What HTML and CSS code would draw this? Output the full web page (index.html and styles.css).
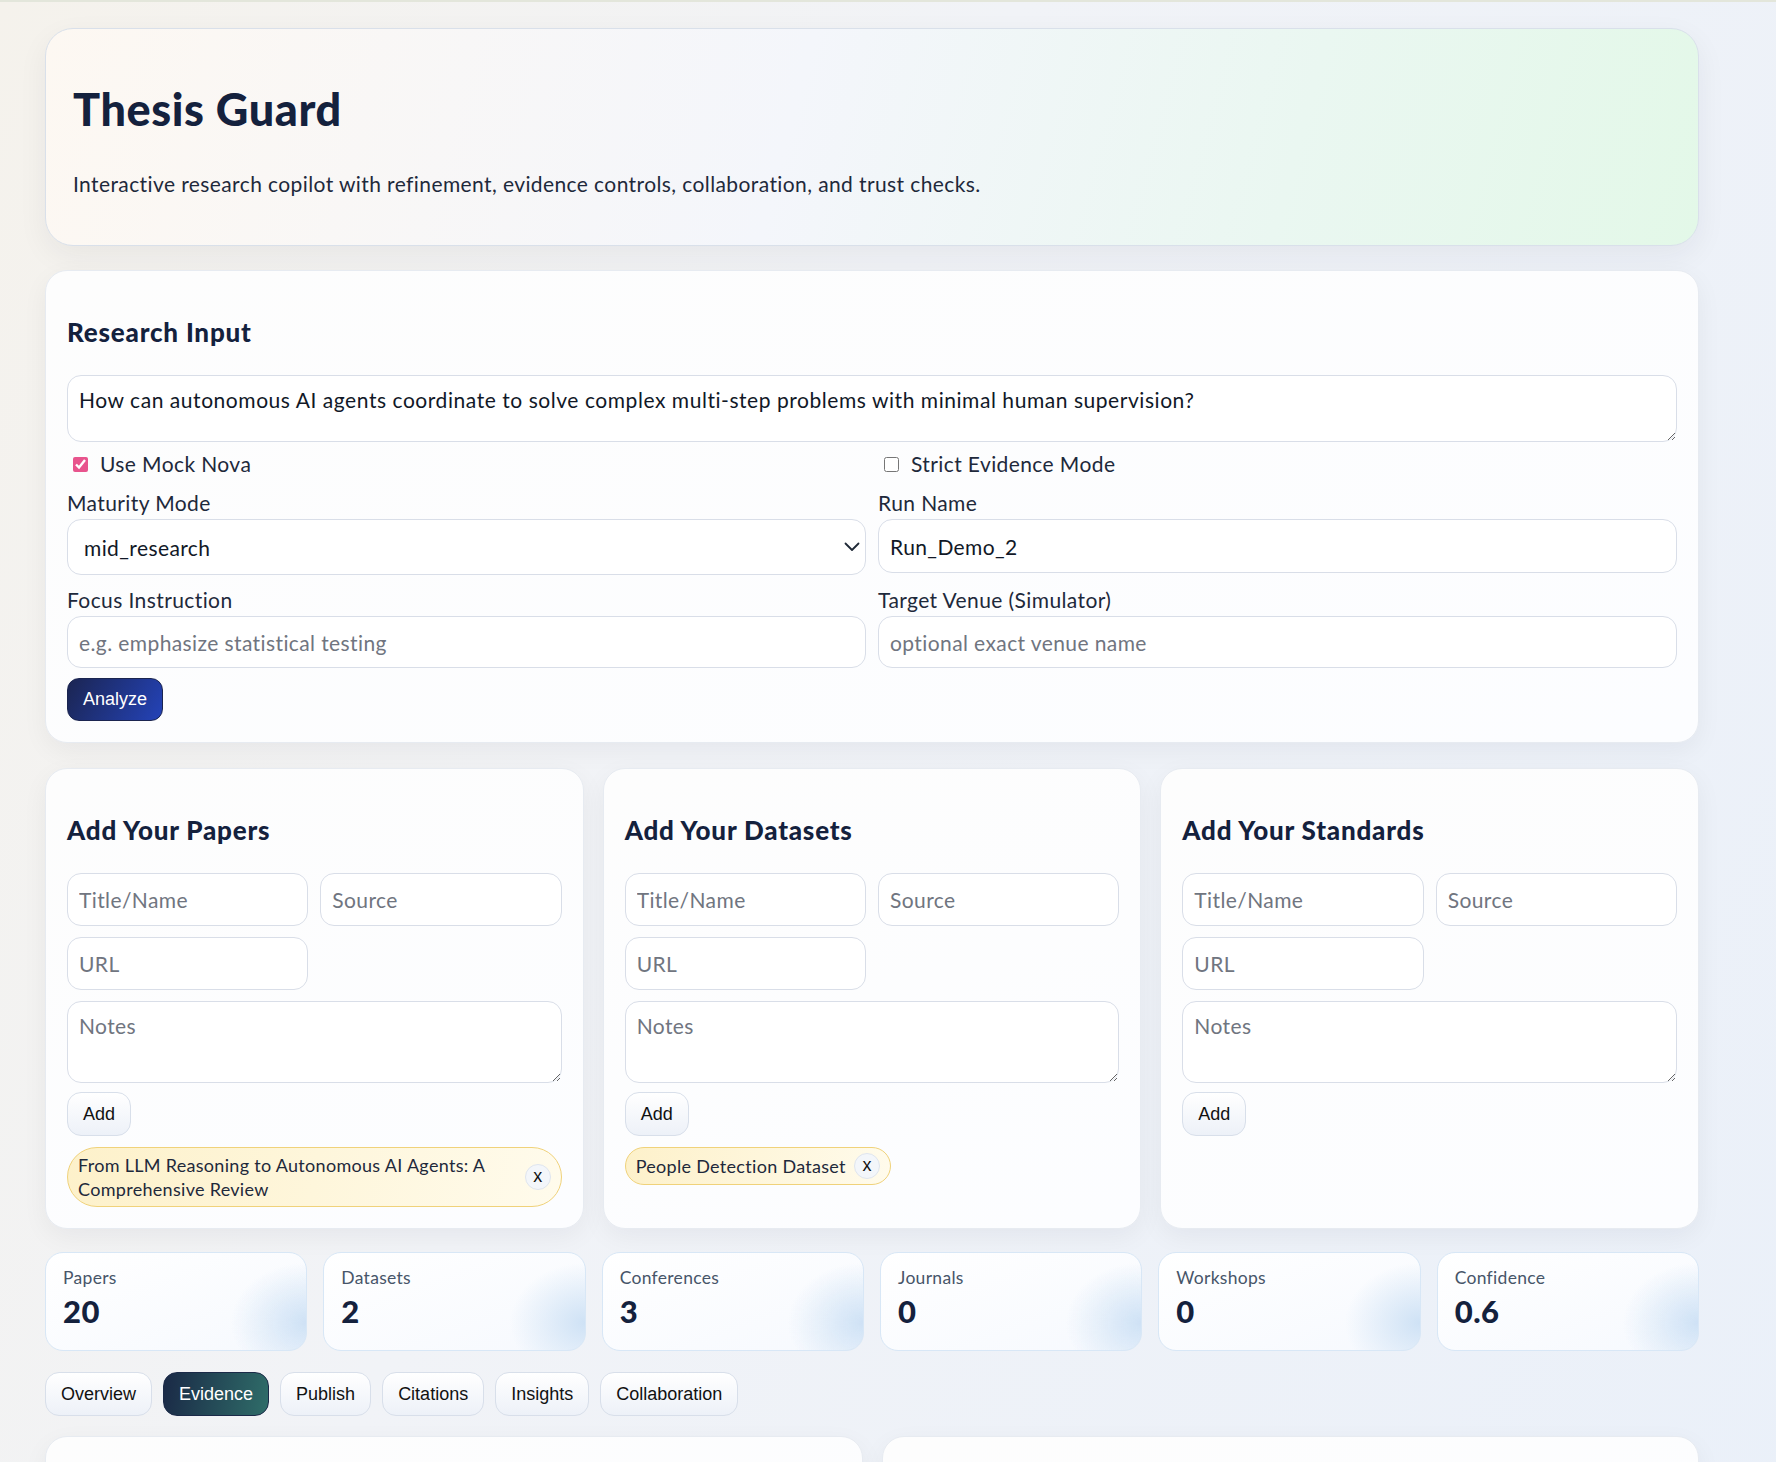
FILE: index.html
```html
<!DOCTYPE html>
<html lang="en">
<head>
    <meta charset="UTF-8">
    <meta name="viewport" content="width=device-width, initial-scale=1.0">
    <title>Thesis Guard</title>
    <link rel="stylesheet" href="styles.css">
</head>
<body>
    <div class="page">
        <!-- Header -->
        <header class="hero">
            <h1>Thesis Guard</h1>
            <p>Interactive research copilot with refinement, evidence controls, collaboration, and trust checks.</p>
        </header>

        <!-- Research input -->
        <section class="card research">
            <h2>Research Input</h2>
            <textarea class="question">How can autonomous AI agents coordinate to solve complex multi-step problems with minimal human supervision?</textarea>
            <div class="form-grid">
                <label class="check"><input type="checkbox" checked> Use Mock Nova</label>
                <label class="check"><input type="checkbox"> Strict Evidence Mode</label>

                <div class="field">
                    <span class="field-label">Maturity Mode</span>
                    <div class="select-wrap">
                        <select class="select">
                            <option>mid_research</option>
                            <option>early_research</option>
                            <option>late_research</option>
                        </select>
                        <svg class="chevron" width="16" height="10" viewBox="0 0 16 10"><polyline points="1.5,1.5 8,8 14.5,1.5" fill="none" stroke="#1f2937" stroke-width="1.8" stroke-linecap="round" stroke-linejoin="round"/></svg>
                    </div>
                </div>
                <div class="field">
                    <span class="field-label">Run Name</span>
                    <input class="text-input run-name" type="text" value="Run_Demo_2">
                </div>

                <div class="field">
                    <span class="field-label">Focus Instruction</span>
                    <input class="text-input short" type="text" placeholder="e.g. emphasize statistical testing">
                </div>
                <div class="field">
                    <span class="field-label">Target Venue (Simulator)</span>
                    <input class="text-input short" type="text" placeholder="optional exact venue name">
                </div>
            </div>
            <button class="btn-primary">Analyze</button>
        </section>

        <!-- User sources -->
        <div class="add-grid">
            <section class="card add-card">
                <h2>Add Your Papers</h2>
                <div class="entry-grid">
                    <input class="entry" type="text" placeholder="Title/Name">
                    <input class="entry" type="text" placeholder="Source">
                    <input class="entry" type="text" placeholder="URL">
                    <textarea class="notes" placeholder="Notes"></textarea>
                </div>
                <button class="btn-soft add-btn">Add</button>
                <div class="chips">
                    <span class="chip"><span>From LLM Reasoning to Autonomous AI Agents: A Comprehensive Review</span><button class="chip-x">x</button></span>
                </div>
            </section>

            <section class="card add-card">
                <h2>Add Your Datasets</h2>
                <div class="entry-grid">
                    <input class="entry" type="text" placeholder="Title/Name">
                    <input class="entry" type="text" placeholder="Source">
                    <input class="entry" type="text" placeholder="URL">
                    <textarea class="notes" placeholder="Notes"></textarea>
                </div>
                <button class="btn-soft add-btn">Add</button>
                <div class="chips">
                    <span class="chip"><span>People Detection Dataset</span><button class="chip-x">x</button></span>
                </div>
            </section>

            <section class="card add-card">
                <h2>Add Your Standards</h2>
                <div class="entry-grid">
                    <input class="entry" type="text" placeholder="Title/Name">
                    <input class="entry" type="text" placeholder="Source">
                    <input class="entry" type="text" placeholder="URL">
                    <textarea class="notes" placeholder="Notes"></textarea>
                </div>
                <button class="btn-soft add-btn">Add</button>
            </section>
        </div>

        <!-- Metrics -->
        <div class="stats">
            <div class="stat"><div class="stat-label">Papers</div><div class="stat-value">20</div></div>
            <div class="stat"><div class="stat-label">Datasets</div><div class="stat-value">2</div></div>
            <div class="stat"><div class="stat-label">Conferences</div><div class="stat-value">3</div></div>
            <div class="stat"><div class="stat-label">Journals</div><div class="stat-value">0</div></div>
            <div class="stat"><div class="stat-label">Workshops</div><div class="stat-value">0</div></div>
            <div class="stat"><div class="stat-label">Confidence</div><div class="stat-value">0.6</div></div>
        </div>

        <nav class="tabs">
            <button class="btn-soft tab">Overview</button>
            <button class="btn-soft tab active">Evidence</button>
            <button class="btn-soft tab">Publish</button>
            <button class="btn-soft tab">Citations</button>
            <button class="btn-soft tab">Insights</button>
            <button class="btn-soft tab">Collaboration</button>
        </nav>

        <div class="panels">
            <section class="card panel"></section>
            <section class="card panel"></section>
        </div>
    </div>
</body>
</html>
```

FILE: styles.css
```css
body {
    margin: 0;
    min-height: 100vh;
    border-top: 2px solid #e3e6db;
    background: linear-gradient(115deg, #f5f2ec 0%, #f1f3f7 40%, #eaf0f9 100%);
    font-family: Lato, "Noto Sans", sans-serif;
    color: #1e293b;
    overflow: hidden;
}

.page {
    width: 1654px;
    margin-left: 45px;
    padding-top: 26px;
    font-size: 21px;
    letter-spacing: 0.4px;
}

/* Header */
.hero {
    box-sizing: border-box;
    height: 218px;
    padding: 54px 27px 0;
    border: 1px solid #d9e0ea;
    border-radius: 28px;
    background: linear-gradient(105deg, #fdf8f2 0%, #f4f6fb 45%, #eaf7f1 75%, #e3f8e8 100%);
    box-shadow: 0 10px 30px rgba(30, 41, 59, 0.06);
}

.hero h1 {
    margin: 0;
    font-size: 45px;
    line-height: 52px;
    font-weight: 900;
    letter-spacing: 0.6px;
    color: #14213d;
}

.hero p {
    margin: 35px 0 0;
    font-size: 21px;
    line-height: 28px;
    color: #1e293b;
}

/* Cards */
.card {
    box-sizing: border-box;
    padding: 46px 21px 21px;
    border: 1px solid #e7ebf1;
    border-radius: 22px;
    background: linear-gradient(160deg, #fdfdfd 0%, #fcfdff 100%);
    box-shadow: 0 8px 26px rgba(15, 23, 42, 0.05);
}

.card h2 {
    margin: 0 0 28px;
    font-size: 26px;
    line-height: 30px;
    font-weight: 900;
    letter-spacing: 0.8px;
    color: #14213d;
}

.research {
    margin-top: 24px;
}

.question,
.notes {
    display: block;
    width: 100%;
    box-sizing: border-box;
    padding: 10px 11px;
    border: 1px solid #d9dee8;
    border-radius: 14px;
    background: #fff;
    font-family: Lato, "Noto Sans", sans-serif;
    font-size: 21px;
    line-height: 28px;
    letter-spacing: 0.4px;
    color: #111827;
}

.question {
    height: 67px;
    letter-spacing: 0.55px;
}

.form-grid {
    display: grid;
    grid-template-columns: 1fr 1fr;
    gap: 11px 12px;
    margin-top: 8px;
}

.check {
    display: flex;
    align-items: center;
    line-height: 28px;
}

.check input {
    width: 15px;
    height: 15px;
    margin: 0 12px 0 6px;
    accent-color: #e8548d;
}

.field-label {
    display: block;
    margin-bottom: 2px;
    line-height: 28px;
}

.select-wrap {
    position: relative;
}

.select {
    display: block;
    width: 100%;
    height: 56px;
    padding: 0 40px 0 16px;
    appearance: none;
    border: 1px solid #d9dee8;
    border-radius: 14px;
    background: #fff;
    font-family: Lato, "Noto Sans", sans-serif;
    font-size: 21px;
    letter-spacing: 0.4px;
    color: #111827;
}

.chevron {
    position: absolute;
    right: 6px;
    top: 23px;
}

.text-input,
.entry {
    display: block;
    width: 100%;
    box-sizing: border-box;
    padding: 0 11px;
    border: 1px solid #d9dee8;
    border-radius: 14px;
    background: #fff;
    font-family: Lato, "Noto Sans", sans-serif;
    font-size: 21px;
    letter-spacing: 0.4px;
    color: #111827;
}

.run-name {
    height: 54px;
}

.short {
    height: 52px;
}

::placeholder {
    color: #707580;
}

.btn-primary {
    display: block;
    height: 43px;
    margin-top: 10px;
    padding: 0 15px;
    border: 1px solid #1b2550;
    border-radius: 12px;
    background: linear-gradient(120deg, #1b2552 0%, #2443b8 100%);
    font-family: "Liberation Sans", Arial, sans-serif;
    font-size: 18px;
    letter-spacing: 0;
    color: #fff;
}

.btn-soft {
    height: 44px;
    padding: 0 15px;
    border: 1px solid #d8dfea;
    border-radius: 14px;
    background: linear-gradient(180deg, #ffffff 0%, #edf1f8 100%);
    font-family: "Liberation Sans", Arial, sans-serif;
    font-size: 18px;
    letter-spacing: 0;
    color: #111;
}

/* Add your ... cards */
.add-grid {
    display: grid;
    grid-template-columns: repeat(3, 1fr);
    gap: 19px;
    margin-top: 25px;
}

.entry-grid {
    display: grid;
    grid-template-columns: 1fr 1fr;
    gap: 11px 12px;
}

.entry {
    height: 53px;
}

.notes {
    grid-column: 1 / -1;
    height: 82px;
}

.add-btn {
    display: block;
    margin-top: 9px;
}

.chips {
    display: flex;
    margin-top: 11px;
}

.chip {
    display: inline-flex;
    align-items: center;
    gap: 8px;
    max-width: 100%;
    box-sizing: border-box;
    padding: 5px 10px;
    border: 1px solid #f0d27a;
    border-radius: 30px;
    background: linear-gradient(100deg, #fdf1ca 0%, #fffbec 100%);
    font-size: 18px;
    line-height: 24px;
    letter-spacing: 0.3px;
    color: #1e293b;
}

.chip-x {
    flex: none;
    width: 26px;
    height: 26px;
    padding: 0 0 2px;
    border: 1px solid #dfe5ee;
    border-radius: 50%;
    background: #f3f6fa;
    font-family: "Liberation Sans", Arial, sans-serif;
    font-size: 18px;
    color: #111;
}

/* Metrics */
.stats {
    display: grid;
    grid-template-columns: repeat(6, 1fr);
    gap: 16px;
    margin-top: 23px;
}

.stat {
    box-sizing: border-box;
    height: 99px;
    padding: 13px 17px 0;
    border: 1px solid #d8e7f6;
    border-radius: 18px;
    background:
        radial-gradient(ellipse 75px 60px at 100% 72%, rgba(202, 223, 244, 0.9) 0%, rgba(202, 223, 244, 0) 100%),
        linear-gradient(160deg, #ffffff 0%, #f6f9fe 100%);
}

.stat-label {
    font-size: 17.5px;
    line-height: 24px;
    letter-spacing: 0.3px;
    color: #475569;
}

.stat-value {
    margin-top: 3px;
    font-size: 31px;
    line-height: 36px;
    font-weight: 900;
    letter-spacing: 0.5px;
    color: #14213d;
}

/* Tabs */
.tabs {
    display: flex;
    gap: 11px;
    margin-top: 21px;
}

.tab.active {
    border-color: #1b2a48;
    background: linear-gradient(100deg, #1a2946 0%, #2f6d69 100%);
    color: #fff;
}

.panels {
    display: grid;
    grid-template-columns: 1fr 1fr;
    gap: 19px;
    margin-top: 20px;
}

.panel {
    height: 220px;
}
```
